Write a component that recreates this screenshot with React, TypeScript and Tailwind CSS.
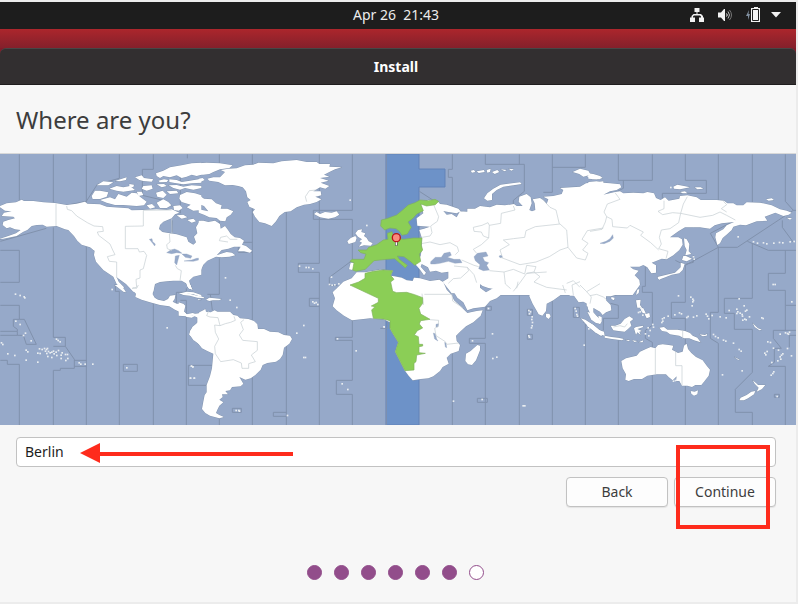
import { clsx } from "clsx";

type Point = [number, number];

interface Tile {
  at: Point;
  land: string[];
  borders?: string[];
  water?: string[];
  specks?: Point[];
}

// The map is drawn in tiles, each with its own origin inside the 2388x813 view box.
const tiles: Tile[] = [
  {
    // Alaska, Canada and the United States
    at: [0, -12],
    land: [
      "-5,170 20,160 48,157 65,149 72,153 100,153 130,157 165,159 200,165 230,161 255,155 262,161 300,163 320,170 340,172 385,175 395,181 430,180 470,178 500,180 515,178 538,188 525,193 515,205 490,215 480,225 477,237 487,246 500,248 530,253 560,262 565,275 580,284 588,277 582,260 592,250 588,232 598,215 604,212 604,374 580,380 567,392 572,408 578,420 566,415 558,400 545,392 520,392 500,394 480,396 465,402 460,425 400,425 378,402 350,382 356,395 372,412 368,418 350,402 340,380 310,360 288,335 282,315 284,302 270,292 245,284 232,272 222,258 205,240 195,238 170,228 140,230 128,224 110,225 95,228 82,240 70,245 50,258 10,266 -5,268 25,258 48,250 62,240 45,238 30,232 20,235 8,225 10,215 25,210 45,205 40,200 5,198 12,188 35,184 15,182 0,172",
      "275,138 285,122 300,122 325,127 320,140 300,147 278,147",
      "300,150 330,142 345,148 355,132 380,140 395,128 410,130 420,140 440,155 432,166 410,168 370,165 345,165 320,158",
      "328,116 350,108 370,112 390,108 405,120 370,125 350,122",
      "290,106 310,94 340,97 325,106",
      "345,93 380,82 378,90 360,94",
      "405,82 425,76 432,84 460,88 455,95 430,93 418,90",
      "388,102 402,104 400,112 388,110",
      "430,108 455,106 458,116 440,122 425,116",
      "410,125 425,125 430,135 416,138",
      "468,70 490,62 510,52 545,46 575,40 604,38 604,74 590,78 575,74 560,80 545,84 530,76 510,82 490,78 480,84 470,78",
      "475,92 492,88 505,90 500,96 480,97",
      "508,88 530,90 545,96 570,92 604,86 604,98 575,100 550,103 525,99 508,96",
      "470,103 492,102 500,108 485,112",
      "506,106 530,105 550,110 575,106 604,108 604,114 580,119 555,114 540,119 520,114",
      "468,128 488,122 500,134 490,144 472,140",
      "500,124 530,122 535,130 510,132",
      "470,158 490,148 505,156 514,166 500,174 480,174",
      "440,166 456,162 466,172 450,176",
      "540,135 560,126 585,130 604,136 604,180 580,182 560,172 572,164 545,156 538,146",
      "520,168 540,166 548,174 536,182 522,180",
      "530,196 550,194 562,202 545,206",
      "562,210 580,206 588,214 575,218",
      "270,288 292,296 294,304 280,300",
    ],
    borders: [
      "168,160 168,228",
      "200,168 202,178 215,182 230,198 262,218 282,228 308,230 310,244 292,246 296,256 330,282 338,300 345,314 322,320 328,334 350,336 350,384",
      "515,180 430,181 430,228 376,229 376,296 414,296 418,306 432,304 440,316 430,356 420,360 420,384 408,388 410,412 396,416",
      "515,206 516,248 508,252 510,276 500,284 502,296 516,302",
      "526,346 532,356 544,362 540,392",
    ],
    water: [
      "500,308 512,300 524,297 536,302 546,310 530,308 515,311",
      "526,318 538,316 534,330 530,345 524,338",
      "546,312 560,312 576,318 572,325 556,322",
      "552,333 575,330 590,325 604,324 604,328 580,334",
      "448,268 456,266 458,275 466,282 464,288 458,280",
    ],
  },
  {
    // Greenland, eastern Canada, Iceland and the British Isles
    at: [600, -12],
    land: [
      "22,86 40,82 60,82 75,66 62,60 85,56 110,55 135,46 160,44 175,38 220,40 245,34 290,30 320,36 350,36 358,42 390,42 388,50 425,52 405,58 388,66 372,74 388,80 360,84 386,92 362,98 388,108 376,116 360,112 340,124 362,124 364,136 346,140 364,148 350,156 330,162 312,164 290,172 272,184 254,186 238,198 228,214 215,228 195,220 178,216 165,200 158,186 165,178 148,170 142,156 152,150 142,142 138,124 128,112 115,108 98,105 75,106 55,96 28,92",
      "-4,40 20,38 60,40 98,46 88,54 60,58 40,66 28,72 10,74 -4,74",
      "-4,86 8,84 14,90 -4,98",
      "-4,134 12,146 35,148 48,160 65,166 62,176 82,176 100,184 92,194 80,202 76,214 60,212 50,204 28,202 12,194 -4,188 -4,178 25,184 12,168 -4,162",
      "-4,212 10,212 25,216 45,212 60,222 62,236 75,228 84,240 92,252 104,262 120,264 132,272 126,284 138,288 156,302 150,308 132,304 114,304 122,290 102,290 85,296 65,300 50,316 68,310 80,306 96,308 106,316 88,320 65,322 48,320 22,332 10,344 2,362 -4,376",
      "342,192 350,186 360,192 375,186 395,188 410,184 418,194 405,202 385,206 360,202",
      "466,250 474,240 486,238 484,246 496,250 492,258 500,264 506,274 518,280 512,287 492,286 476,290 486,278 478,274 486,268 474,260",
      "442,274 452,264 466,258 470,264 466,276 446,282",
      "452,338 462,338 462,350 458,360 447,358",
    ],
    borders: ["62,262 80,258 90,268 112,268", "62,262 58,272 84,276", "320,155 316,140 328,122 350,120"],
    specks: [[298, 348], [318, 352], [326, 352], [338, 356], [76, 383], [394, 381], [388, 403], [396, 405], [404, 404], [416, 401], [500, 226], [450, 150]],
  },
  {
    // Russia, eastern Europe, the Middle East and central Asia
    at: [1140, -12],
    land: [
      "120,165 145,150 172,152 180,162 200,164 235,176 242,184 230,190 205,186 190,183 200,194 215,192 230,202 240,184 262,185 262,176 285,176 300,168 330,172 350,164 375,166 402,162 410,168 428,168 416,155 418,140 440,132 452,142 455,160 448,180 456,184 466,180 464,160 458,148 480,144 492,152 500,162 505,148 490,140 520,138 545,132 550,120 540,114 600,110 618,100 670,94 670,435 350,435 345,418 325,414 308,408 290,395 300,430 215,430 188,395 205,385 205,365 185,368 168,362 150,365 144,352 125,342 122,350 138,368 132,376 118,356 108,345 108,335 122,318 125,300 125,262 118,240 132,236 150,230 112,227 110,205 130,190 125,170",
      "312,145 322,130 340,116 362,104 420,97 425,102 400,106 370,110 350,120 336,132 336,150 322,152",
      "578,66 600,56 625,62 632,74 610,80 598,72",
      "620,78 640,74 664,82 660,88 636,88",
      "272,62 282,60 286,66 276,68", "290,64 312,60 314,66 296,69", "320,60 332,56 330,66 322,68", "336,66 352,60 358,66 344,72", "362,58 380,60 374,64", "386,56 402,58 394,62",
    ],
    borders: [
      "145,152 160,162 176,200 172,214 152,228 156,248 150,258 126,262",
      "118,282 150,276 180,284 210,278 232,290 236,304 226,314",
      "400,168 405,180 364,190 362,220 328,226 324,218 306,226 280,232 282,244 304,246 310,258 326,264 304,284 280,298 290,310",
      "328,226 326,264", "486,146 510,172 528,180 538,222",
      "366,318 360,300 388,284 370,270 400,266 434,262 438,242 466,230 540,222 560,240 564,292 540,300 508,320 468,336 420,344 362,322",
      "564,292 590,324 616,330 624,310 608,300 624,280 606,268 622,242 670,234",
      "222,348 262,352 266,362 242,384 220,386 205,400", "245,330 282,346 296,350", "262,352 282,374 290,398",
      "328,362 372,366 376,402 392,416", "372,366 400,358 434,372 440,346 468,350 462,366 440,370 420,398 400,424",
      "462,366 480,380 462,396 500,412 560,420", "560,400 580,392 600,412", "440,370 500,366",
    ],
    water: [
      "152,335 166,322 184,322 192,310 210,306 214,316 202,322 222,328 240,328 246,338 225,340 205,334 180,340 165,342 152,342",
      "282,320 292,310 318,306 324,318 308,322 314,334 326,338 320,346 328,360 310,362 296,356 300,344 286,332",
      "357,318 364,316 368,322 360,323",
    ],
  },
  {
    // Siberia, Japan and Kamchatka
    at: [1770, -12],
    land: [
      "-5,96 20,94 40,98 60,100 90,103 94,112 80,120 60,124 40,134 75,126 90,124 100,130 130,128 160,130 172,126 192,130 198,144 212,150 225,142 236,152 268,146 270,138 292,136 320,142 332,150 380,150 402,152 412,160 430,160 440,166 460,166 470,157 510,158 545,166 570,178 590,182 605,188 596,194 580,198 556,188 536,196 524,200 532,212 500,214 468,226 450,224 430,230 425,240 412,252 398,264 390,280 382,285 376,262 378,250 400,238 410,226 432,216 395,220 374,226 360,236 330,232 310,232 285,232 265,244 240,262 265,262 276,268 278,284 268,300 250,316 230,328 215,326 185,338 198,346 198,368 184,370 172,352 160,345 148,350 120,350 130,358 146,362 134,376 148,390 150,404 128,435 -5,435",
      "282,265 290,268 298,282 296,304 304,312 286,316 290,300 284,288",
      "280,318 288,318 306,326 290,334 276,330",
      "272,338 284,342 278,360 268,370 245,374 226,382 210,388 205,380 230,374 255,368 272,352",
      "203,380 212,382 210,390 204,386",
      "-5,70 10,72 30,78 38,84 20,88 -5,86",
      "250,110 262,104 282,108 300,112 270,118 252,116", "314,112 332,112 340,116 322,118", "270,126 285,124 292,130 278,130", "528,148 545,145 552,150 536,152", "590,203 606,205 600,209",
    ],
    borders: [
      "75,128 90,148 52,162 42,186 50,200 46,216 36,238 0,244",
      "50,200 66,208 68,230 112,234 120,226 160,246 152,256 182,278 206,300",
      "222,152 222,176 204,184 218,194 248,188 272,190 330,202 368,196 390,186 410,196 436,210",
      "292,140 280,162 272,190 266,218 240,236 214,240 208,262 214,282 206,296 234,304 228,326",
      "400,154 410,164 394,176 410,186",
    ],
    water: ["30,280 48,274 60,266 68,254 70,264 60,274 42,281"],
    specks: [[490, 275], [502, 279], [520, 278], [530, 281], [551, 279], [568, 277], [578, 278], [600, 275], [612, 274], [444, 260], [549, 403], [555, 403], [310, 320], [312, 327], [242, 112]],
  },
  {
    // Mexico, Central America and the eastern Pacific
    at: [0, 393],
    land: [
      "384,0 462,0 458,28 464,38 474,44 492,48 504,42 510,32 526,30 524,42 518,50 530,56 550,56 556,62 552,80 562,90 578,92 586,86 604,84 604,96 586,92 575,98 560,96 546,84 525,74 508,64 480,60 450,52 425,44 406,36 408,26 396,14",
      "344,0 358,0 372,12 378,22 370,20",
      "545,24 560,20 580,22 604,30 604,36 580,28",
      "560,0 572,0 574,10 568,12", "598,108 578,125 568,148 580,165 604,182 604,110",
    ],
    borders: ["415,0 410,10 398,8"],
    specks: [[46, 27], [60, 31], [72, 35], [74, 38], [336, 13], [47, 108], [60, 118], [76, 144], [70, 151], [93, 167], [4, 173], [8, 178], [23, 206], [44, 211], [78, 195], [83, 200], [78, 225], [113, 231], [118, 191], [126, 193], [133, 190], [139, 193], [142, 190], [136, 198], [145, 199], [150, 203], [155, 201], [160, 198], [113, 204], [120, 205], [143, 214], [155, 217], [170, 211], [175, 196], [186, 203], [196, 208], [202, 208], [183, 210], [183, 220], [197, 226], [203, 220], [169, 162], [174, 166], [180, 170], [237, 233], [242, 237], [255, 237], [278, 237], [380, 248], [501, 128], [574, 243], [578, 245], [571, 279], [582, 279], [168, 201], [162, 206], [140, 205]],
  },
  {
    // South America and the Caribbean
    at: [540, 393],
    land: [
      "52,94 58,82 70,76 76,72 78,80 92,82 104,76 112,80 150,80 160,90 172,92 180,100 205,102 222,108 232,118 234,132 252,132 270,140 295,142 312,150 330,152 336,162 328,176 312,188 308,210 300,222 288,230 262,234 248,240 242,254 226,270 212,280 196,284 178,276 190,296 182,304 156,306 150,316 136,318 144,328 126,328 128,336 118,344 130,352 118,362 112,374 108,384 118,390 132,396 118,400 90,392 76,384 66,372 70,350 74,330 80,322 80,300 90,274 96,250 100,206 82,198 66,190 52,172 44,160 28,150 30,138 38,126 52,118",
      "-4,82 -4,52 8,56 14,64 10,78 20,88 38,84 56,90 54,98 40,92 20,94 -4,92",
      "-4,24 20,24 42,30 70,36 74,40 52,38 30,32 10,30", "78,44 88,38 104,40 124,42 118,46 98,46 88,48",
      "20,0 30,2 36,12 26,10", "52,42 64,44 56,46",
    ],
    borders: [
      "86,78 80,92 90,96 114,98 120,122 136,116 152,112 166,106 162,94",
      "120,122 104,120 106,142 116,162 104,184 106,206 122,230 160,224 184,234 186,250 206,250 206,236 226,230 214,210 232,196 232,170 188,166 178,150 190,134 182,112 192,104",
    ],
    specks: [[34, 243], [38, 245], [31, 279], [43, 279], [168, 376], [176, 376], [178, 378], [350, 144], [371, 121], [371, 217], [376, 217], [472, 161], [528, 197], [486, 296], [503, 313], [322, 391], [398, 50], [403, 54], [408, 52], [413, 58], [170, 67], [612, 125], [150, 45]],
  },
  {
    // Africa, Arabia and India
    at: [1140, 393],
    land: [
      "-70,-38 -45,-38 0,-46 38,-43 32,-28 42,-26 65,-22 80,-14 98,-12 102,-22 120,-20 150,-12 178,-16 190,-8 200,14 215,30 222,46 240,62 252,74 262,84 290,78 308,76 302,92 280,112 258,124 240,140 228,152 230,168 240,180 236,198 212,206 200,218 206,236 188,246 180,258 160,274 145,280 122,282 98,286 86,272 75,257 62,232 46,200 55,172 40,148 30,130 30,112 10,102 -30,100 -50,102 -84,106 -108,92 -130,76 -142,64 -135,40 -142,22 -128,8 -110,-10 -85,-20",
      "192,-12 300,-12 300,8 318,22 335,12 345,8 365,28 350,40 330,48 315,65 280,70 262,76 250,52 232,38 216,12",
      "330,-10 332,8 380,12 420,10 428,20 450,24 448,34 458,56 476,88 487,92 498,78 500,56 520,46 545,28 562,24 570,32 582,32 596,52 610,50 622,56 624,72 632,88 645,104 660,118 665,110 640,82 640,62 665,64 665,-15",
      "498,86 508,86 512,94 506,102 498,96",
      "258,206 272,198 292,180 300,182 300,196 288,226 276,240 264,238 256,228",
      "602,100 616,104 640,120 665,140 665,154 645,142 624,124",
      "655,92 665,96 665,110 658,104",
    ],
    borders: [
      "133,28 216,28", "126,26 130,60", "216,28 218,48 248,68", "150,104 176,106 174,124 164,130 168,152 196,170 200,178 236,174",
      "410,10 414,-10", "548,0 556,24", "580,30 576,0 600,-10", "600,0 620,20 634,36 630,56", "620,20 660,-4",
    ],
    water: ["160,144 166,146 170,162 174,168 164,162", "194,172 198,174 200,188 196,186", "168,118 176,116 174,126 168,126"],
    specks: [[277, 167], [337, 146], [338, 220], [350, 216], [306, 343], [220, 348], [429, 362], [434, 362], [446, 76], [451, 80], [448, 86], [456, 95], [455, 103], [457, 112], [456, 122], [454, 128], [446, 152], [448, 156], [585, 70], [588, 78], [590, 88], [592, 93], [325, 70], [12, 125], [612, 180], [626, 131]],
  },
  {
    // South-east Asia and Oceania
    at: [1770, 393],
    land: [
      "-10,-20 142,-20 134,0 120,14 98,22 84,28 62,34 48,34 48,46 62,60 64,76 48,82 38,90 30,80 12,70 -10,64",
      "-8,80 8,86 26,98 30,116 18,114 4,104",
      "-8,110 10,120 24,134 42,140 44,152 28,148 10,136 -8,124",
      "44,152 64,156 84,158 102,162 96,166 66,162 44,158",
      "62,122 76,122 92,116 104,102 118,94 130,102 120,110 124,122 114,132 104,140 86,138 70,136",
      "64,36 74,38 72,46 64,42", "142,14 148,12 146,24 138,30", "138,46 152,44 150,60 156,68 142,68",
      "164,88 178,84 180,96 170,100", "150,68 160,70 168,86 158,84", "132,130 138,126 160,122 158,127 142,132 156,138 148,140 152,150 142,142 138,150",
      "106,164 120,166 116,169", "126,166 142,168 134,171", "146,172 160,166 158,172",
      "208,128 222,126 232,134 262,134 285,138 300,144 308,152 322,158 332,172 312,166 298,160 282,160 268,152 240,148 230,140 216,138",
      "94,228 108,220 140,212 150,200 168,192 182,186 196,190 204,180 218,178 236,180 250,182 246,194 264,204 278,200 282,182 290,176 294,192 304,204 318,216 338,226 350,242 360,254 356,272 342,290 334,300 316,300 306,306 292,302 276,302 268,288 258,288 260,274 248,286 236,276 228,268 200,268 172,272 156,282 132,282 116,288 106,284 108,268 98,250",
      "302,318 314,320 324,316 322,328 312,332 304,326",
      "488,286 498,294 504,300 526,300 516,312 500,320 506,308 494,296", "484,320 496,318 492,328 474,340 462,346 448,346 452,338 470,330",
      "328,148 345,150 352,146 350,152 338,154", "432,216 450,224 444,224", "488,114 496,122 504,130 516,134 508,136 494,126",
    ],
    borders: ["196,190 196,268", "257,200 257,242 276,242 276,300", "278,136 278,160", "0,32 20,28 40,36 50,44", "70,126 90,122 104,126 112,116"],
    specks: [[265, 32], [302, 36], [308, 42], [308, 50], [306, 62], [310, 46], [254, 89], [268, 83], [274, 86], [290, 97], [294, 94], [310, 96], [320, 92], [217, 101], [222, 98], [218, 108], [215, 112], [234, 93], [348, 87], [352, 93], [356, 101], [366, 91], [390, 95], [408, 98], [417, 76], [447, 41], [440, 72], [440, 85], [443, 80], [450, 84], [456, 88], [457, 93], [466, 78], [470, 75], [462, 62], [464, 102], [458, 105], [468, 104], [478, 95], [515, 98], [519, 100], [370, 148], [376, 154], [384, 158], [400, 165], [407, 168], [430, 174], [447, 193], [453, 198], [397, 269], [456, 257], [533, 170], [541, 172], [524, 204], [527, 209], [531, 199], [550, 189], [565, 195], [570, 147], [586, 143], [592, 145], [598, 141], [595, 147], [592, 190], [604, 212], [578, 206], [574, 210], [570, 215], [572, 222], [563, 227], [545, 232], [543, 270], [551, 260], [548, 265], [561, 334], [605, 50], [155, 76], [150, 80], [145, 82], [158, 90], [152, 68], [188, 118], [190, 126], [180, 136], [174, 128], [176, 152], [166, 146], [250, 288], [256, 286]],
  },
];

const zoneLines = [
  "M19 154V202 M0 250H19V282H0 M0 305H19V319H13V326L17 329V331H0 M17 331V335H0 M19 319H24L36 344H26L23 335H17 M0 360H7V364H19V425",
  "M53 154V203 M0 241L46 228 M53 227V337H65V346L74 359V368H60V370H53V425 M53 346H65 M74 360H86 M74 366H86 M86 154V202 M86 245V425",
  "M119 154V178L97 184L86 201L66 205 M115 284V291H119V425 M153 154V169H142V195L163 200L172 206 M153 300V425 M187 154V158 M180 165V213",
  "M172 220V232 M176 303V292H186V288 M180 300H186V425 M212 365H188V385H206 M123 364H137V371H123Z",
  "M219 154V164 M219 215V228 M219 258V294H207 M210 294L212 310 M219 415V425 M252 154V165 M252 205V252 M252 242H238V252H252V425 M286 205V425",
  "M319 154V263H298V272H319V425 M319 298H309V306H319 M352 154V210H313V219H352V260L329 277V285H337 M352 318V337H335V340H352V380H336V394H352V425",
  "M232 408H241V412H232Z M286 412H273V416H286 M386 154V225 M387 320V328H380 M386 329V425",
  "M452 154V169H448V177H452V207 M419 191L433 200 M452 353V425 M485 154V164H524V191L513 200V205 M519 154V164 M485 298V338H469V343H485V425",
  "M486 306H491V310H486Z M477 398H487V402H477Z M519 290V425 M527 309H532V315H527Z M527 334H532V339H527Z M552 154V192H543 M552 167H585V154 M552 295V425",
  "M573 307H579V317H573Z M583 322H585V425 M618 154V180H652V154 M623 180V188L615 192 M685 154V180H706V193H662V202",
  "M718 154V201 M785 154V201L793 210L737 247H718L710 233L733 221 M718 247L685 265L675 260 M693 255V262L685 264 M752 154V205 M747 241L768 250H796 M782 220V227L793 242 M793 210H796",
  "M752 243V298H724V313H734V329H752V372L735 389V412H752V425 M718 247V312H710V338L718 343V425 M685 265V302H671V318H685V425",
  "M645 265V286H642V292H652V325L645 330V338L652 342V425 M610 303L618 305V318H603V330 M618 340V425 M785 250V273H768V290H785V305H796 M785 305V330",
  "M796 330H773V338L781 348H774V362L768 366H785V425 M796 335H789V347 M774 394H779V397H774Z",
];

// Countries that share the selected time zone
const selectedLand = [
  "2,228 4,210 20,206 50,195 68,180 85,165 105,158 120,150 145,152 165,148 176,154 166,164 140,168 122,162 130,182 110,192 100,204 84,216 94,232 82,252 66,256 58,244 48,236 30,234 14,240",
  "-66,300 -40,300 -34,292 -10,284 10,270 24,268 22,250 36,245 42,262 70,268 100,264 126,264 124,286 128,300 118,312 122,334 104,346 96,338 88,332 72,320 52,318 58,328 82,346 76,354 60,340 44,326 20,328 0,330 -18,332 -30,344 -44,358 -72,364 -82,360 -78,338 -90,334 -84,328 -48,328 -42,312 -58,308",
  "-90,405 -64,396 -45,385 -45,370 -20,364 10,360 38,362 32,376 42,388 32,396 38,424 50,428 80,427 104,434 128,443 128,460 117,475 122,492 150,508 122,512 118,522 128,534 112,542 103,555 115,560 117,583 128,583 128,588 117,590 117,608 136,610 110,615 108,635 102,640 102,660 75,662 62,637 46,605 55,577 40,553 30,535 30,512 10,507 -20,505 -25,480 -15,470 -26,468 -5,457 -5,445",
];

function WorldMap() {
  return (
    <svg
      viewBox="0 0 2388 813"
      className="block w-full bg-[#96a9c9]"
      role="img"
      aria-label="Time zone map"
    >
      <path d="M1158 0H1257V45H1335V99H1257V813H1158Z" fill="#6d92c8" stroke="#6383b8" strokeWidth="3" />
      <g transform="translate(1 -461) scale(3)" fill="none" stroke="#8091ac" strokeWidth="1">
        {zoneLines.map((d) => (
          <path key={d} d={d} />
        ))}
      </g>

      <g fill="none" stroke="#8496b0" strokeWidth="3" strokeLinejoin="round">
        {tiles.map((tile) => (
          <g key={tile.at.join()} transform={`translate(${tile.at[0]} ${tile.at[1]})`}>
            {tile.land.map((points) => (
              <polygon key={points} points={points} />
            ))}
          </g>
        ))}
      </g>

      {tiles.map((tile) => (
        <g key={tile.at.join()} transform={`translate(${tile.at[0]} ${tile.at[1]})`}>
          <g fill="#fff">
            {tile.land.map((points) => (
              <polygon key={points} points={points} />
            ))}
          </g>
          <g fill="#96a9c9" stroke="#8fa2bd" strokeWidth="1">
            {tile.water?.map((points) => (
              <polygon key={points} points={points} />
            ))}
          </g>
        </g>
      ))}

      {tiles.map((tile) => (
        <g key={tile.at.join()} transform={`translate(${tile.at[0]} ${tile.at[1]})`}>
          <g fill="none" stroke="#c3ccd0" strokeWidth="2">
            {tile.borders?.map((points) => (
              <polyline key={points} points={points} />
            ))}
          </g>
          <g fill="#e9edf0">
            {tile.specks?.map(([x, y]) => (
              <rect key={`${x},${y}`} x={x - 2} y={y - 2} width="5" height="5" />
            ))}
          </g>
        </g>
      ))}

      <g transform="translate(1140 -12)">
        <g fill="#8bce56" stroke="#7fb15d" strokeWidth="2">
          {selectedLand.map((points) => (
            <polygon key={points} points={points} />
          ))}
        </g>
        <path d="M49 274V287" stroke="#555" strokeWidth="8" />
        <path d="M49 274V286" stroke="#fff" strokeWidth="4" />
        <circle cx="49" cy="263" r="12" fill="#fb8b7c" stroke="#b8161a" strokeWidth="4" />
      </g>
    </svg>
  );
}

function NetworkIcon() {
  return (
    <svg viewBox="0 0 16 14" className="h-3.5 w-4" fill="#f2f2f2">
      <path d="M5.5 0h5v4h-2v2h3.500l2 2v1.500H15V14h-5V9.500h2V8.500L11 7.500H5l-1 1v1h2V14H1V9.500h1.500V8l2-2h3V4h-2z" />
    </svg>
  );
}

function VolumeIcon() {
  return (
    <svg viewBox="0 0 16 14" className="h-3.5 w-4" fill="none">
      <path d="M1 4.500h3L7 1h1v12H7L4 9.500H1z" fill="#f2f2f2" />
      <path d="M9.500 5.500q1.500 1.500 0 3" stroke="#f2f2f2" />
      <path d="M11 3.500q3 3.500 0 7" stroke="#b5b5b5" />
      <path d="M12.500 2q4 5 0 10" stroke="#777" />
    </svg>
  );
}

function BatteryIcon() {
  return (
    <svg viewBox="0 0 16 16" className="h-4 w-4">
      <path d="M4 3L1 9h2v4l2-6H3.500z" fill="#8190a0" />
      <path d="M9 1V0h4v1h2v14H6V1z" fill="#f2f2f2" />
      <path d="M7.500 2.500h6v11h-6z" fill="none" stroke="#1d1d1d" />
    </svg>
  );
}

const steps = [1, 2, 3, 4, 5, 6, 7];
const currentStep = 6;

const buttonClass =
  "h-[30px] w-[102px] rounded border border-[#c2c2c2] bg-[#fdfdfd] text-sm text-[#3d3d3d] shadow-[0_1px_1px_rgba(0,0,0,0.08)]";

export default function App() {
  return (
    <div className="flex min-h-screen flex-col bg-[#ececec] pt-0.5 pr-0.5 pb-0.5 font-['Noto_Sans',sans-serif]">
      <header className="grid h-[27px] grid-cols-[1fr_auto_1fr] items-center bg-[#1d1d1d] pr-1 pb-0.5 text-sm text-[#ececec]">
        <time className="col-start-2 whitespace-pre">Apr 26  21:43</time>
        <div className="flex items-center justify-end gap-3 pr-[11px]">
          <NetworkIcon />
          <VolumeIcon />
          <div className="flex items-center gap-2.5">
            <BatteryIcon />
            <svg viewBox="0 0 10 6" className="h-1.5 w-2.5" fill="#f2f2f2">
              <path d="M0 0h10L5 5.500z" />
            </svg>
          </div>
        </div>
      </header>

      <div className="bg-[#7f1d29]">
        <div className="h-[19px] bg-linear-to-b from-[#ac262c] to-[#84202b]" />
        <div className="flex h-[37px] items-center justify-center rounded-t-md border-t border-b border-t-[#484646] border-b-[#1f1d1e] bg-[#322f30] pr-1 text-sm font-bold text-white">
          Install
        </div>
      </div>

      <main className="flex flex-1 flex-col bg-[#f7f7f7]">
        <h1 className="flex h-[68px] items-center px-4 pt-0.5 text-2xl text-[#3d3d3d]">Where are you?</h1>
        <div className="border-t border-[#d8d8d8]">
          <WorldMap />
        </div>

        <div className="pt-3 pr-5 pl-4">
          <div className="relative">
            <input
              aria-label="Location"
              defaultValue="Berlin"
              className="block h-[30px] w-full rounded border border-[#c2c2c2] bg-white px-2 pb-0.5 text-sm text-[#1d1d1d] outline-none"
            />
            <svg
              viewBox="0 0 214 20"
              className="pointer-events-none absolute top-1.5 left-16 h-5 w-[214px]"
              fill="#fe2b1c"
            >
              <path d="M0 10L20 0V9H213V13H20V20z" />
            </svg>
          </div>
          <div className="flex justify-end gap-1.5 pt-2.5">
            <button className={buttonClass}>Back</button>
            <div className="relative">
              <button className={buttonClass}>Continue</button>
              <div className="pointer-events-none absolute -top-8 right-1.5 -bottom-[22px] left-0.5 border-4 border-[#fe2b1c]" />
            </div>
          </div>
        </div>

        <div className="flex justify-center gap-3 pt-[58px] pr-1.5 pb-5">
          {steps.map((step) => (
            <span
              key={step}
              className={clsx(
                "h-[15px] w-[15px] rounded-full border border-[#924d8b]",
                step <= currentStep ? "bg-[#924d8b]" : "bg-white"
              )}
            />
          ))}
        </div>
      </main>
    </div>
  );
}
